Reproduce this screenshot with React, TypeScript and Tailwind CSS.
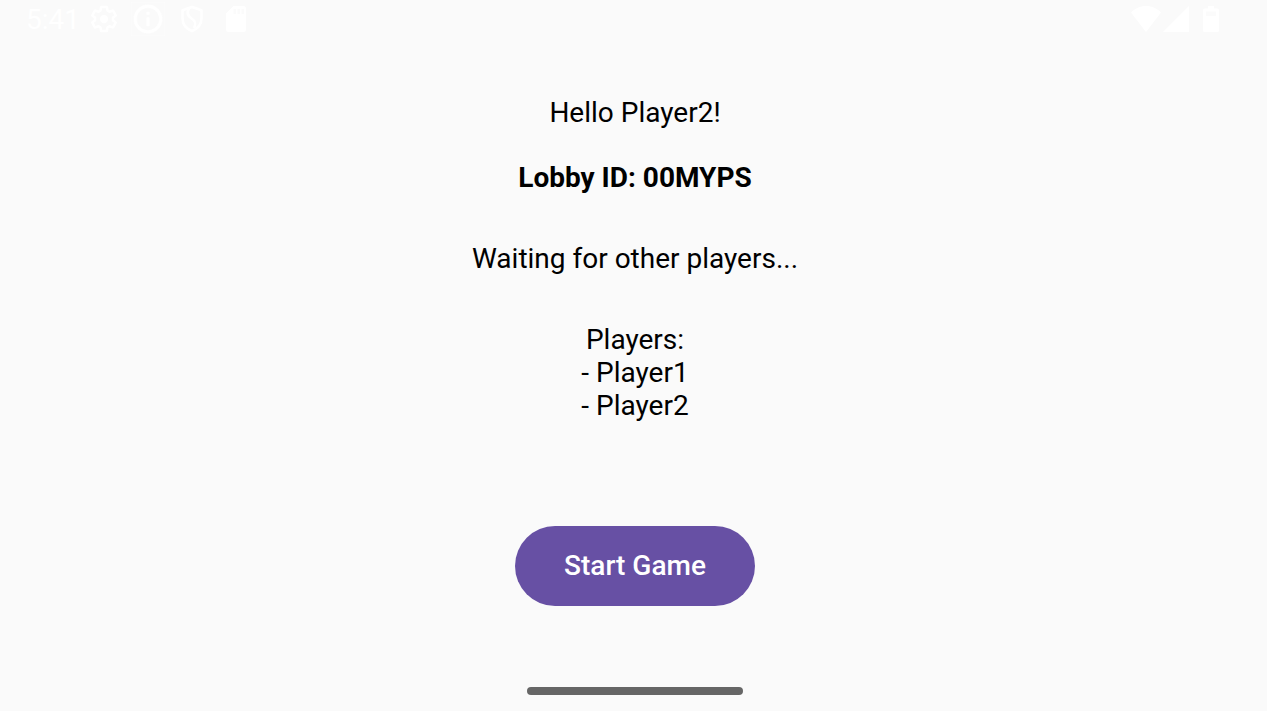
import { MdInfoOutline } from "react-icons/md";

const players = ["Player1", "Player2"];

function SettingsIcon() {
  return (
    <svg viewBox="0 0 24 24" className="size-[30px]" aria-hidden="true">
      <path
        fill="none"
        stroke="white"
        strokeWidth="2"
        strokeLinejoin="round"
        d="M19.14 12.94c.04-.3.06-.61.06-.94c0-.32-.02-.64-.07-.94l2.03-1.58c.18-.14.23-.41.12-.61l-1.92-3.32c-.12-.22-.37-.29-.59-.22l-2.39.96c-.5-.38-1.03-.7-1.62-.94L14.4 2.81c-.04-.24-.24-.41-.48-.41h-3.84c-.24 0-.43.17-.47.41L9.25 5.35C8.66 5.59 8.12 5.92 7.63 6.29L5.24 5.33c-.22-.08-.47 0-.59.22L2.74 8.87c-.12.21-.08.47.12.61l2.03 1.58C4.84 11.36 4.8 11.69 4.8 12s.02.64.07.94l-2.03 1.58c-.18.14-.23.41-.12.61l1.92 3.32c.12.22.37.29.59.22l2.39-.96c.5.38 1.03.7 1.62.94l.36 2.54c.05.24.24.41.48.41h3.84c.24 0 .44-.17.47-.41l.36-2.54c.59-.24 1.13-.56 1.62-.94l2.39.96c.22.08.47 0 .59-.22l1.92-3.32c.12-.22.07-.47-.12-.61Z"
      />
      <circle cx="12" cy="12" r="3.300" fill="white" />
    </svg>
  );
}

function ShieldIcon() {
  return (
    <svg viewBox="0 0 24 28" className="h-7 w-6" fill="none" aria-hidden="true">
      <path
        d="M12 2 21.500 5.300V13c0 6-3.800 10.800-9.500 13C6.300 23.800 2.500 19 2.500 13V5.300Z"
        stroke="white"
        strokeWidth="2.600"
        strokeLinejoin="round"
      />
      <path
        d="M9 3.500C6.500 7.500 7.500 10.500 11 13c4.500 3 5.500 5.500 3 10"
        stroke="white"
        strokeWidth="2.600"
      />
    </svg>
  );
}

function SdCardIcon() {
  return (
    <svg viewBox="0 0 20 26" className="h-[26px] w-5" aria-hidden="true">
      <path
        fill="white"
        fillRule="evenodd"
        d="M7.500 0H17.500A2.500 2.500 0 0 1 20 2.500v21a2.500 2.500 0 0 1-2.500 2.500h-15A2.500 2.500 0 0 1 0 23.500V7.500ZM7.500 3v5H10V3Zm4 0v5H14V3Zm4 0v5H18V3Z"
      />
      <path fill="white" fillOpacity="0.3" d="M7.500 3H18v5H7.500Z" />
    </svg>
  );
}

function WifiIcon() {
  return (
    <svg viewBox="0 0 30 26" className="h-[26px] w-[30px]" aria-hidden="true">
      <path fill="white" d="M15 26 0 6.500C4 2.500 9 0 15 0s11 2.500 15 6.500Z" />
    </svg>
  );
}

function SignalIcon() {
  return (
    <svg viewBox="0 0 26 26" className="h-[26px] w-[26px]" aria-hidden="true">
      <path fill="white" d="M26 0v26H0Z" />
    </svg>
  );
}

function BatteryIcon() {
  return (
    <svg viewBox="0 0 16 26" className="h-[26px] w-4" aria-hidden="true">
      <path
        fill="white"
        fillRule="evenodd"
        d="M5 0h6v2.500h3.500A1.500 1.500 0 0 1 16 4v20.500a1.500 1.500 0 0 1-1.500 1.500h-13A1.500 1.500 0 0 1 0 24.500V4a1.500 1.500 0 0 1 1.500-1.500H5ZM3 5.500V10h10V5.500Z"
      />
      <path fill="white" fillOpacity="0.3" d="M3 5.500h10V10H3Z" />
    </svg>
  );
}

function StatusBar() {
  return (
    <header className="flex h-[38px] items-center justify-between pl-[26px] pr-12 text-white">
      <div className="flex items-center">
        <time className="w-[62px] leading-[33px]">5:41</time>
        <span className="flex w-8 justify-center">
          <SettingsIcon />
        </span>
        <span className="flex w-14 justify-center">
          <MdInfoOutline className="size-[34px]" stroke="white" strokeWidth="0.3" aria-hidden="true" />
        </span>
        <span className="flex w-8 justify-center">
          <ShieldIcon />
        </span>
        <span className="flex w-14 justify-center">
          <SdCardIcon />
        </span>
      </div>
      <div className="flex items-center">
        <WifiIcon />
        <span className="ml-0.5 mr-3.5 flex">
          <SignalIcon />
        </span>
        <BatteryIcon />
      </div>
    </header>
  );
}

export default function App() {
  return (
    <div className="flex min-h-screen flex-col bg-[#fafafa] font-['Roboto',sans-serif] text-[28px] leading-[33px] text-black">
      <StatusBar />
      <main className="flex grow flex-col items-center pl-[3px] pt-[58px] text-center">
        <p>Hello Player2!</p>
        <h1 className="mt-8 font-bold">Lobby ID: 00MYPS</h1>
        <p className="mt-12">Waiting for other players...</p>
        <section className="mt-12">
          <h2>Players:</h2>
          <ul>
            {players.map((name) => (
              <li key={name}>- {name}</li>
            ))}
          </ul>
        </section>
        <button
          type="button"
          className="mt-[104px] h-20 min-w-60 rounded-full bg-[#6750a4] px-12 pb-0.5 font-medium text-white"
        >
          Start Game
        </button>
      </main>
      <footer className="flex justify-center pb-4 pl-[3px]">
        <div className="h-2 w-[216px] rounded-full bg-[#666666]" />
      </footer>
    </div>
  );
}
